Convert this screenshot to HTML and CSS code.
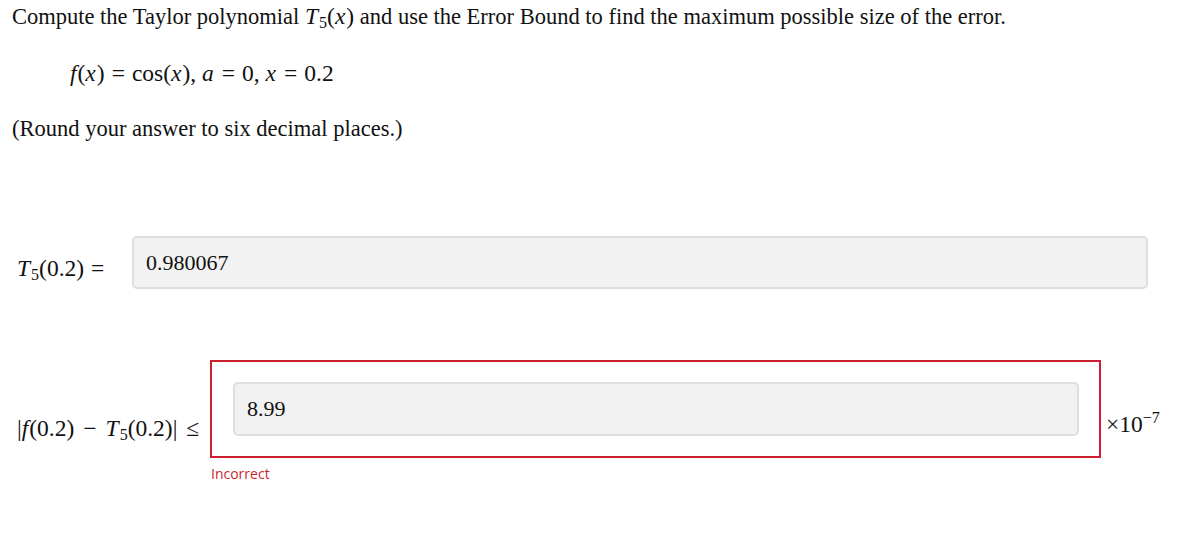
FILE: index.html
```html
<!DOCTYPE html>
<html lang="en">
<head>
    <meta charset="UTF-8">
    <title>Taylor Polynomial</title>
    <link rel="stylesheet" href="styles.css">
</head>
<body>
<div class="question">
    <p class="prompt">Compute the Taylor polynomial <span class="math"><i>T</i><sub>5</sub>(<i>x</i>)</span> and use the Error Bound to find the maximum possible size of the error.</p>
    <p class="formula math"><i>f</i>(<i>x</i>)<span class="op">=</span>cos(<i>x</i>), <i>a</i><span class="op">=</span>0, <i>x</i><span class="op">=</span>0.2</p>
    <p class="note">(Round your answer to six decimal places.)</p>

    <div class="row first">
        <span class="label math"><i>T</i><sub>5</sub>(0.2)<span class="op">=</span></span>
        <div class="answer">0.980067</div>
    </div>

    <div class="row second">
        <span class="label math">|<i>f</i>(0.2)<span class="op">&minus;</span><i>T</i><sub>5</sub>(0.2)|<span class="op">&le;</span></span>
        <div class="result">
            <div class="wrong">
                <div class="answer">8.99</div>
            </div>
            <div class="feedback">Incorrect</div>
        </div>
        <span class="unit math">&times;10<sup>&minus;7</sup></span>
    </div>
</div>
</body>
</html>
```

FILE: styles.css
```css
body {
    font-family: 'Liberation Serif', 'Times New Roman', serif;
    font-size: 22.5px;
    color: #111;
    margin: 0;
    padding: 0;
    background-color: #fff;
}
.question {
    padding: 3px 12px;
}
p {
    margin: 0;
}
.math {
    font-size: 23.5px;
}
.math i {
    padding-right: 1px;
}
.op {
    padding: 0 7px;
}
sub {
    font-size: 16px;
    vertical-align: -4px;
    line-height: 0;
}
sup {
    font-size: 16px;
    vertical-align: 9px;
    line-height: 0;
}
.prompt {
    line-height: 26px;
}
.formula {
    margin-top: 30px;
    padding-left: 58px;
    line-height: 26px;
}
.note {
    margin-top: 30px;
    line-height: 26px;
}
.row {
    display: flex;
}
.first {
    margin-top: 94px;
    align-items: center;
}
.first .label {
    width: 115px;
    padding-left: 5px;
    padding-top: 12px;
}
.answer {
    flex: 1;
    box-sizing: border-box;
    background-color: #f2f2f2;
    border: 2px solid #dedede;
    border-radius: 5px;
    padding: 10px 12px 0;
    line-height: 30px;
    font-size: 22px;
}
.first .answer {
    margin-right: 21px;
    height: 53px;
}
.second {
    margin-top: 71px;
    align-items: flex-start;
}
.second .label {
    padding-left: 5px;
    width: 193px;
    padding-top: 55px;
}
.second .label .op {
    padding: 0 9px;
}
.result {
    width: 891px;
}
.wrong {
    display: flex;
    height: 98px;
    box-sizing: border-box;
    border: 2px solid #cc1f2f;
    padding: 20px 20px 0 21px;
}
.wrong .answer {
    height: 54px;
}
.feedback {
    margin-top: 6px;
    padding-left: 1px;
    font-family: 'Open Sans', sans-serif;
    font-size: 14px;
    color: #cc1f2f;
}
.unit {
    padding-top: 51px;
    padding-left: 5px;
}
```
